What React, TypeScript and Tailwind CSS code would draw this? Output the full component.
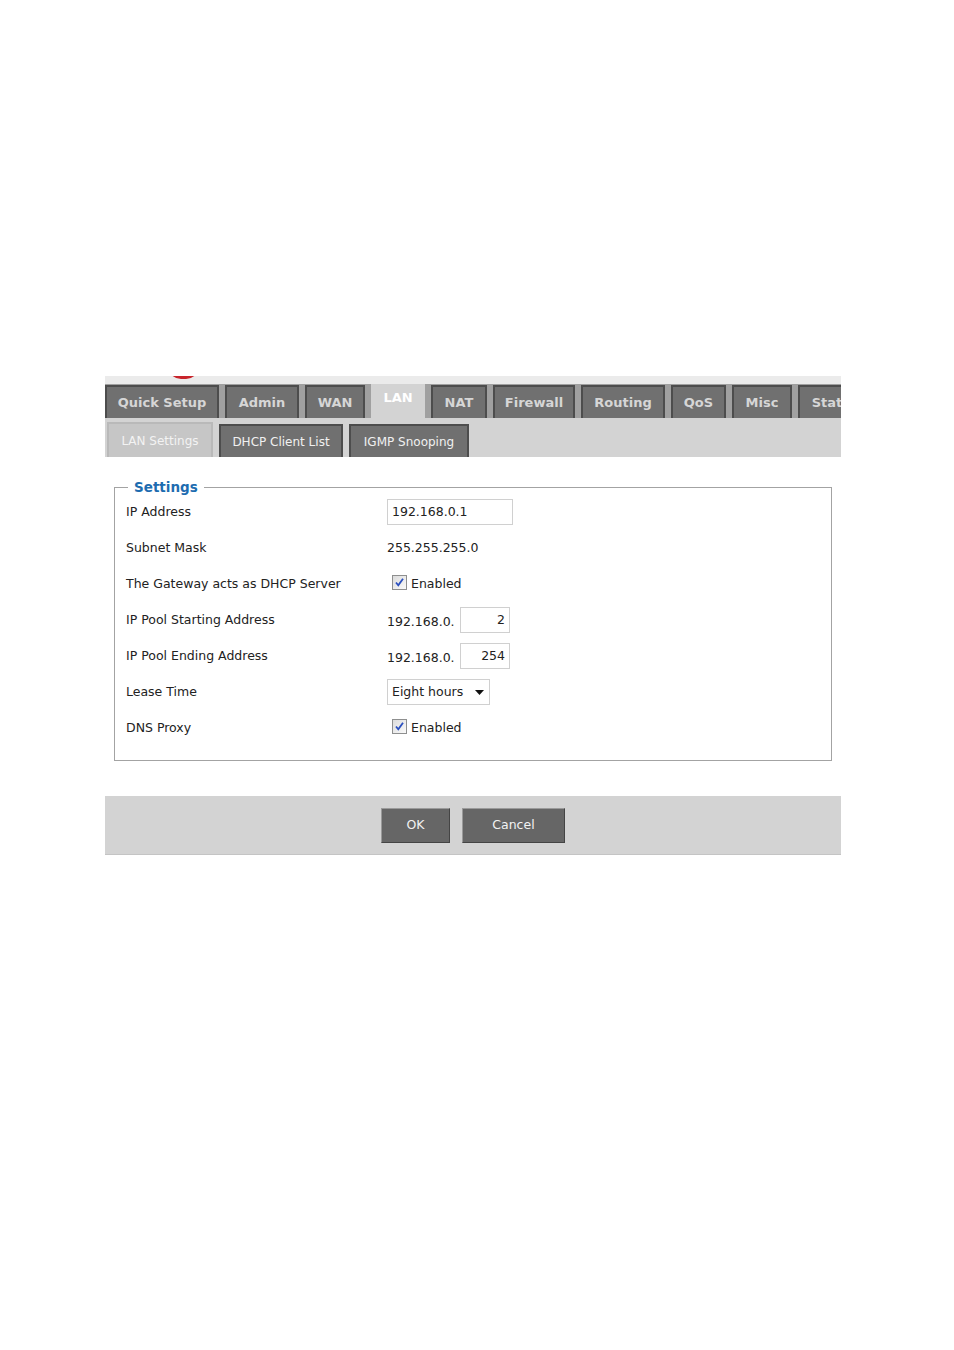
import React from "react";

const tabs = [
  { name: "Quick Setup", w: 114 },
  { name: "Admin", w: 74 },
  { name: "WAN", w: 60 },
  { name: "LAN", w: 54, active: true },
  { name: "NAT", w: 56 },
  { name: "Firewall", w: 82 },
  { name: "Routing", w: 84 },
  { name: "QoS", w: 55 },
  { name: "Misc", w: 60 },
  { name: "Status", w: 75 },
];

function Check() {
  return (
    <span className="inline-flex h-[15px] w-[15px] items-center justify-center border border-[#8e8f8f] bg-gradient-to-br from-[#dcdcdc] to-[#fafafa]">
      <svg width="11" height="11" viewBox="0 0 11 11">
        <path d="M2 5.5 L4.3 8.3 L9 1.8" fill="none" stroke="#2a4fbf" strokeWidth="1.8" />
      </svg>
    </span>
  );
}

function Row({ label, children }: { label: string; children: React.ReactNode }) {
  return (
    <div className="flex h-[36px] items-center">
      <div className="w-[261px] text-[12.5px] text-[#222]">{label}</div>
      <div className="flex items-center text-[12.5px] text-[#222]">{children}</div>
    </div>
  );
}

export default function App() {
  return (
    <div className="min-h-[1350px] w-[954px] bg-white pt-[376px] font-['DejaVu_Sans',sans-serif]">
      <div className="ml-[105px] w-[736px] overflow-hidden">
        {/* header strip */}
        <div className="relative h-[8px] overflow-hidden bg-[#ebebeb]">
          <div className="absolute left-[63px] top-[-23px] h-[26px] w-[31px] rounded-full bg-[#c8242b]" />
        </div>
        {/* main tabs */}
        <div className="flex h-[34px] items-end gap-[6px] bg-[#a0a0a0]">
          {tabs.map((t) =>
            t.active ? (
              <div
                key={t.name}
                className="flex h-[36px] shrink-0 items-center justify-center bg-[#d3d3d3] pb-[4px] text-[13px] font-bold text-white"
                style={{ width: t.w }}
              >
                {t.name}
              </div>
            ) : (
              <div
                key={t.name}
                className="flex h-[33px] shrink-0 items-center justify-center border-2 border-b-0 border-[#4d4d4d] bg-[#707070] text-[13px] font-bold text-[#d6d6d6]"
                style={{ width: t.w }}
              >
                {t.name}
              </div>
            )
          )}
        </div>
        {/* sub tabs */}
        <div className="flex h-[39px] items-end gap-[6px] bg-[#d3d3d3] pl-[2px]">
          <div className="flex h-[35px] w-[106px] items-center justify-center border-2 border-b-0 border-[#b9b9b9] bg-[#c6c6c6] text-[12px] text-[#f3f3f3]">
            LAN Settings
          </div>
          <div className="flex h-[33px] w-[124px] items-center justify-center border-2 border-b-0 border-[#4d4d4d] bg-[#707070] text-[12px] text-[#f0f0f0]">
            DHCP Client List
          </div>
          <div className="flex h-[33px] w-[120px] items-center justify-center border-2 border-b-0 border-[#4d4d4d] bg-[#707070] text-[12px] text-[#f0f0f0]">
            IGMP Snooping
          </div>
        </div>

        {/* settings */}
        <div className="px-[9px] pt-[22px]">
          <fieldset className="border border-[#a3a3a3] pb-[14px] pl-[11px]">
            <legend className="ml-[2px] px-[6px] text-[13.5px] font-bold leading-[16px] text-[#1d6cb0]">
              Settings
            </legend>
            <div className="-mt-[1px]">
              <Row label="IP Address">
                <div className="flex h-[26px] w-[126px] items-center border border-[#d0d0d0] px-[4px]">192.168.0.1</div>
              </Row>
              <Row label="Subnet Mask">255.255.255.0</Row>
              <Row label="The Gateway acts as DHCP Server">
                <span className="ml-[5px] mr-[4px]"><Check /></span>Enabled
              </Row>
              <Row label="IP Pool Starting Address">
                <span className="mt-[4px] w-[73px]">192.168.0.</span>
                <div className="flex h-[26px] w-[50px] items-center justify-end border border-[#d0d0d0] px-[4px]">2</div>
              </Row>
              <Row label="IP Pool Ending Address">
                <span className="mt-[4px] w-[73px]">192.168.0.</span>
                <div className="flex h-[26px] w-[50px] items-center justify-end border border-[#d0d0d0] px-[4px]">254</div>
              </Row>
              <Row label="Lease Time">
                <div className="flex h-[26px] w-[103px] items-center justify-between border border-[#d0d0d0] pl-[4px] pr-[5px]">
                  <span>Eight hours</span>
                  <svg width="9" height="5" viewBox="0 0 9 5"><path d="M0 0 H9 L4.5 5 Z" fill="#111" /></svg>
                </div>
              </Row>
              <Row label="DNS Proxy">
                <span className="ml-[5px] mr-[4px]"><Check /></span>Enabled
              </Row>
            </div>
          </fieldset>
        </div>

        {/* buttons */}
        <div className="mt-[35px] flex h-[59px] items-center justify-center gap-[12px] border-b border-[#c4c4c4] bg-[#d3d3d3]">
          <button className="h-[35px] w-[69px] border border-b-[#444] border-l-[#9a9a9a] border-r-[#444] border-t-[#9a9a9a] bg-[#666666] text-[12.5px] text-[#f2f2f2]">
            OK
          </button>
          <button className="h-[35px] w-[103px] border border-b-[#444] border-l-[#9a9a9a] border-r-[#444] border-t-[#9a9a9a] bg-[#666666] text-[12.5px] text-[#f2f2f2]">
            Cancel
          </button>
        </div>
      </div>
    </div>
  );
}
